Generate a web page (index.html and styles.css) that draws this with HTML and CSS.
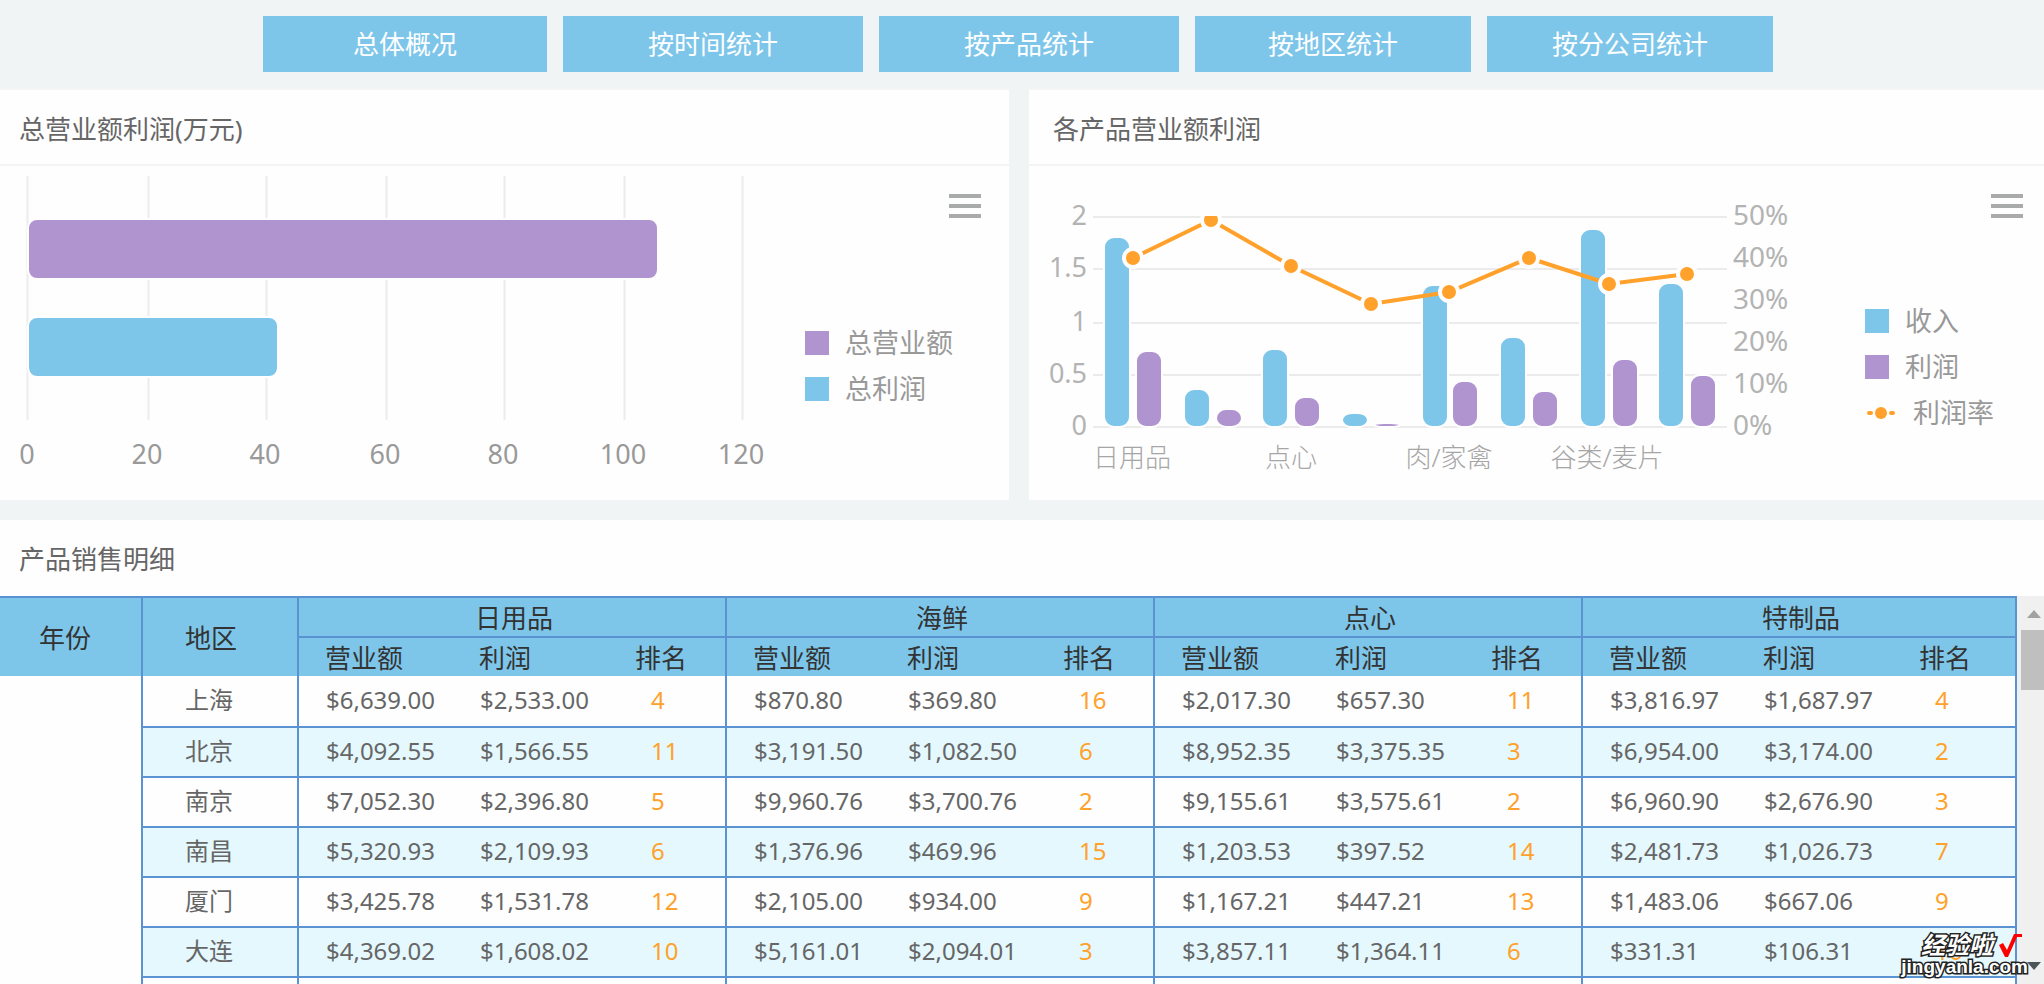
FILE: index.html
```
<!DOCTYPE html>
<html lang="zh-CN">
<head>
<meta charset="utf-8">
<title>产品销售统计</title>
<link rel="stylesheet" href="styles.css">
</head>
<body>
<nav class="tabs">
  <button class="tab tab-overview" type="button">总体概况</button>
  <button class="tab tab-time" type="button">按时间统计</button>
  <button class="tab tab-product" type="button">按产品统计</button>
  <button class="tab tab-region" type="button">按地区统计</button>
  <button class="tab tab-branch" type="button">按分公司统计</button>
</nav>

<main class="board">
  <div class="charts">
    <section class="panel">
      <h2 class="panel-title">总营业额利润(万元)</h2>
      <div class="chart-body">
        <svg class="plot" viewBox="0 0 805 334" role="img" aria-label="总营业额利润">
          <path class="grid-thin" d="M27.5 10V254M148.5 10V254M266.5 10V254M386.5 10V254M504.5 10V254M624.5 10V254M742.5 10V254"/>
          <rect class="bar purple" x="28" y="53" width="630" height="60" rx="9"/>
          <rect class="bar blue" x="28" y="151" width="250" height="60" rx="9"/>
          <g class="axis axis-dark middle">
            <text x="27" y="298">0</text><text x="147" y="298">20</text><text x="265" y="298">40</text><text x="385" y="298">60</text><text x="503" y="298">80</text><text x="623" y="298">100</text><text x="741" y="298">120</text>
          </g>
        </svg>
        <div class="side side-total">
          <button class="menu" type="button" aria-label="菜单"><span class="menu-line"></span><span class="menu-line"></span><span class="menu-line"></span></button>
          <ul class="legend">
            <li class="legend-item"><span class="swatch swatch-purple"></span>总营业额</li>
            <li class="legend-item"><span class="swatch swatch-blue"></span>总利润</li>
          </ul>
        </div>
      </div>
    </section>

    <section class="panel">
      <h2 class="panel-title panel-title-wide">各产品营业额利润</h2>
      <div class="chart-body">
        <svg class="plot" viewBox="0 0 836 334" role="img" aria-label="各产品营业额利润">
          <defs><clipPath id="area"><rect x="64" y="50" width="640" height="212"/></clipPath></defs>
          <path class="grid" d="M64 51H698M64 103H698M64 157H698M64 209H698M64 261H698"/>
          <g class="blue bar">
            <rect x="75" y="71" width="26" height="190" rx="10"/>
            <rect x="155" y="223" width="26" height="38" rx="10"/>
            <rect x="233" y="183" width="26" height="78" rx="10"/>
            <rect x="313" y="247" width="26" height="14" rx="10"/>
            <rect x="393" y="119" width="26" height="142" rx="10"/>
            <rect x="471" y="171" width="26" height="90" rx="10"/>
            <rect x="551" y="63" width="26" height="198" rx="10"/>
            <rect x="629" y="117" width="26" height="144" rx="10"/>
          </g>
          <g class="purple bar">
            <rect x="107" y="185" width="26" height="76" rx="10"/>
            <rect x="187" y="243" width="26" height="18" rx="10"/>
            <rect x="265" y="231" width="26" height="30" rx="10"/>
            <rect x="345" y="257" width="26" height="4" rx="10"/>
            <rect x="423" y="215" width="26" height="46" rx="10"/>
            <rect x="503" y="225" width="26" height="36" rx="10"/>
            <rect x="583" y="193" width="26" height="68" rx="10"/>
            <rect x="661" y="209" width="26" height="52" rx="10"/>
          </g>
          <g clip-path="url(#area)">
            <polyline class="trend" points="104,92 182,54 262,100 342,138 420,126 500,92 580,118 658,108"/>
            <g class="dot">
              <circle cx="104" cy="92" r="9"/><circle cx="182" cy="54" r="9"/><circle cx="262" cy="100" r="9"/><circle cx="342" cy="138" r="9"/><circle cx="420" cy="126" r="9"/><circle cx="500" cy="92" r="9"/><circle cx="580" cy="118" r="9"/><circle cx="658" cy="108" r="9"/>
            </g>
          </g>
          <g class="axis end">
            <text x="58" y="59">2</text><text x="58" y="111">1.5</text><text x="58" y="165">1</text><text x="58" y="217">0.5</text><text x="58" y="269">0</text>
          </g>
          <g class="axis percent">
            <text x="704" y="59">50%</text><text x="704" y="101">40%</text><text x="704" y="143">30%</text><text x="704" y="185">20%</text><text x="704" y="227">10%</text><text x="704" y="269">0%</text>
          </g>
          <g class="axis category middle">
            <text x="103" y="301">日用品</text><text x="262" y="301">点心</text><text x="420" y="301">肉/家禽</text><text x="578" y="301">谷类/麦片</text>
          </g>
        </svg>
        <div class="side side-product">
          <button class="menu" type="button" aria-label="菜单"><span class="menu-line"></span><span class="menu-line"></span><span class="menu-line"></span></button>
          <ul class="legend">
            <li class="legend-item"><span class="swatch swatch-blue"></span>收入</li>
            <li class="legend-item"><span class="swatch swatch-purple"></span>利润</li>
            <li class="legend-item"><svg class="swatch-line" viewBox="0 0 32 16" aria-hidden="true"><path class="trend round" d="M4 8H6M26 8H28"/><circle class="dot-small" cx="16" cy="8" r="6"/></svg>利润率</li>
          </ul>
        </div>
      </div>
    </section>
  </div>

  <section class="panel details">
    <h2 class="details-title">产品销售明细</h2>
    <div class="details-body">
      <div class="table-view">
        <table class="sales">
          <colgroup>
            <col class="col-year"><col class="col-city">
            <col class="col-money"><col class="col-money"><col class="col-rank">
            <col class="col-money"><col class="col-money"><col class="col-rank">
            <col class="col-money"><col class="col-money"><col class="col-rank">
            <col class="col-money"><col class="col-money"><col class="col-last">
          </colgroup>
          <thead>
            <tr>
              <th class="year line" rowspan="2">年份</th><th class="city line" rowspan="2">地区</th>
              <th class="group line" colspan="3">日用品</th><th class="group line" colspan="3">海鲜</th><th class="group line" colspan="3">点心</th><th class="group line" colspan="3">特制品</th>
            </tr>
            <tr class="sub">
              <th>营业额</th><th>利润</th><th class="line">排名</th>
              <th>营业额</th><th>利润</th><th class="line">排名</th>
              <th>营业额</th><th>利润</th><th class="line">排名</th>
              <th>营业额</th><th>利润</th><th class="line">排名</th>
            </tr>
          </thead>
          <tbody>
            <tr class="first"><td class="blank line" rowspan="7"></td><td class="city line">上海</td><td>$6,639.00</td><td>$2,533.00</td><td class="rank line">4</td><td>$870.80</td><td>$369.80</td><td class="rank line">16</td><td>$2,017.30</td><td>$657.30</td><td class="rank line">11</td><td>$3,816.97</td><td>$1,687.97</td><td class="rank line">4</td></tr>
            <tr><td class="city line">北京</td><td>$4,092.55</td><td>$1,566.55</td><td class="rank line">11</td><td>$3,191.50</td><td>$1,082.50</td><td class="rank line">6</td><td>$8,952.35</td><td>$3,375.35</td><td class="rank line">3</td><td>$6,954.00</td><td>$3,174.00</td><td class="rank line">2</td></tr>
            <tr><td class="city line">南京</td><td>$7,052.30</td><td>$2,396.80</td><td class="rank line">5</td><td>$9,960.76</td><td>$3,700.76</td><td class="rank line">2</td><td>$9,155.61</td><td>$3,575.61</td><td class="rank line">2</td><td>$6,960.90</td><td>$2,676.90</td><td class="rank line">3</td></tr>
            <tr><td class="city line">南昌</td><td>$5,320.93</td><td>$2,109.93</td><td class="rank line">6</td><td>$1,376.96</td><td>$469.96</td><td class="rank line">15</td><td>$1,203.53</td><td>$397.52</td><td class="rank line">14</td><td>$2,481.73</td><td>$1,026.73</td><td class="rank line">7</td></tr>
            <tr><td class="city line">厦门</td><td>$3,425.78</td><td>$1,531.78</td><td class="rank line">12</td><td>$2,105.00</td><td>$934.00</td><td class="rank line">9</td><td>$1,167.21</td><td>$447.21</td><td class="rank line">13</td><td>$1,483.06</td><td>$667.06</td><td class="rank line">9</td></tr>
            <tr><td class="city line">大连</td><td>$4,369.02</td><td>$1,608.02</td><td class="rank line">10</td><td>$5,161.01</td><td>$2,094.01</td><td class="rank line">3</td><td>$3,857.11</td><td>$1,364.11</td><td class="rank line">6</td><td>$331.31</td><td>$106.31</td><td class="rank line">16</td></tr>
            <tr><td class="city line"></td><td></td><td></td><td class="rank line"></td><td></td><td></td><td class="rank line"></td><td></td><td></td><td class="rank line"></td><td></td><td></td><td class="rank line"></td></tr>
          </tbody>
        </table>
      </div>
      <div class="scrollbar" aria-hidden="true">
        <svg class="arrow" viewBox="0 0 14 8"><path fill="#a0a2a2" d="M7 0L14 8H0Z"/></svg>
        <div class="thumb"></div>
        <svg class="arrow arrow-down" viewBox="0 0 14 8"><path fill="#4d5558" d="M0 0H14L7 8Z"/></svg>
      </div>
    </div>
  </section>
</main>

<div class="watermark">
  <div class="mark-top"><span class="mark-name">经验啦</span><svg class="tick" viewBox="0 0 24 24" aria-hidden="true"><path d="M1 12L5 10L9 17L16 1H24V4H19L10 24H7Z" fill="#f00"/></svg></div>
  <div class="mark-site">jingyanla.com</div>
</div>
</body>
</html>
```
FILE: styles.css
```
* { box-sizing: border-box; }

body {
  margin: 0;
  height: 100vh;
  display: flex;
  flex-direction: column;
  overflow: hidden;
  background: #f0f4f5;
  color: #666;
  font-family: "Noto Sans", "Noto Sans CJK SC", sans-serif;
}

button { font: inherit; border: 0; cursor: pointer; }

.tabs {
  display: flex;
  justify-content: center;
  gap: 16px;
  padding: 16px 8px 16px 0;
}
.tab {
  height: 56px;
  padding: 0;
  background: #7dc6ea;
  color: #fff;
  font-size: 26px;
  line-height: 36px;
}
.tab-overview { width: 284px; }
.tab-time, .tab-product { width: 300px; }
.tab-region { width: 276px; }
.tab-branch { width: 286px; }

.board {
  flex: 1;
  min-height: 0;
  display: flex;
  flex-direction: column;
  gap: 20px;
}
.charts {
  display: grid;
  grid-template-columns: 1009fr 1015fr;
  gap: 20px;
}
.panel { background: #fefefe; min-width: 0; }
.charts .panel { border-top: 2px solid #f3f4f4; }
.panel-title, .details-title {
  margin: 0;
  font-size: 26px;
  font-weight: 400;
  line-height: 36px;
}
.panel-title {
  padding: 21px 19px 17px;
  border-bottom: 2px solid #f3f4f4;
}
.panel-title-wide { padding-left: 24px; }

.chart-body { display: flex; align-items: flex-start; }
.plot { flex: 1; min-width: 0; display: block; }
.grid-thin { stroke: #ececec; stroke-width: 2; }
.grid { stroke: #ebebeb; stroke-width: 2; }
.bar { stroke: #fefefe; stroke-width: 2; }
.blue { fill: #7dc6ea; }
.purple { fill: #b094d0; }
.trend { fill: none; stroke: #ffa12b; stroke-width: 4; }
.round { stroke-linecap: round; }
.dot { fill: #ffa12b; stroke: #fefefe; stroke-width: 4; }
.dot-small { fill: #ffa12b; }
.axis { font-size: 27px; fill: #b3b3b3; }
.axis-dark { fill: #999; }
.percent { font-size: 28px; }
.category { font-size: 26px; font-weight: 300; fill: #a6a6a6; }
.middle { text-anchor: middle; }
.end { text-anchor: end; }

.side {
  align-self: stretch;
  display: flex;
  flex-direction: column;
  justify-content: space-between;
}
.side-total { width: 204px; padding: 28px 28px 88px 0; }
.side-product { width: 179px; padding: 28px 21px 64px 0; }
.menu {
  align-self: flex-end;
  width: 32px;
  padding: 0;
  background: none;
  display: flex;
  flex-direction: column;
  gap: 6px;
}
.menu-line { width: 100%; height: 4px; background: #a9abaa; }
.legend { margin: 0; padding: 0; list-style: none; }
.legend-item {
  display: flex;
  align-items: center;
  height: 46px;
  font-size: 27px;
  line-height: 46px;
  color: #999;
  white-space: nowrap;
}
.swatch { width: 24px; height: 24px; margin-right: 16px; }
.swatch-purple { background: #b094d0; }
.swatch-blue { background: #7dc6ea; }
.swatch-line { width: 32px; height: 16px; margin-right: 16px; }

.details {
  flex: 1;
  min-height: 0;
  display: flex;
  flex-direction: column;
}
.details-title { padding: 21px 19px 19px; }
.details-body { flex: 1; min-height: 0; display: flex; }
.table-view { flex: 1; min-width: 0; overflow: hidden; }
.sales {
  width: 100%;
  table-layout: fixed;
  border-collapse: separate;
  border-spacing: 0;
  border-top: 2px solid #5b93d2;
  font-size: 24px;
  line-height: 34px;
}
.col-year { width: 143px; }
.col-city { width: 156px; }
.col-money { width: 154px; }
.col-rank { width: 120px; }
.col-last { width: 126px; }

.sales th {
  padding: 2px 0 0 26px;
  background: #7dc6ea;
  color: #333;
  font-size: 26px;
  font-weight: 400;
  line-height: 36px;
  text-align: left;
}
.sales .line { border-right: 2px solid #5b93d2; }
.sales .group {
  height: 40px;
  padding: 2px 0 0 4px;
  border-bottom: 2px solid #5b93d2;
  text-align: center;
}
.sales .sub th { height: 38px; }
.sales .sub .line { padding-left: 28px; }
.sales .year { padding-left: 39px; }
.sales .city { padding-left: 42px; }
.sales td {
  height: 50px;
  padding: 0 0 2px 27px;
  border-bottom: 2px solid #5b93d2;
  background: #fefefe;
  white-space: nowrap;
}
.sales .first td { height: 52px; }
.sales tr:nth-child(even) td { background: #e4f8fe; }
.sales .blank { border-bottom: 0; }
.sales .rank { padding-left: 44px; color: #ffa12b; }

.scrollbar {
  width: 27px;
  padding: 14px 0;
  display: flex;
  flex-direction: column;
  align-items: flex-end;
  gap: 12px;
  background: #f0f0f0;
}
.arrow { width: 14px; height: 8px; margin-right: 3px; }
.arrow-down { margin-top: auto; }
.thumb { width: 23px; height: 60px; background: #bfbfbf; }

.watermark {
  position: absolute;
  right: 16px;
  bottom: 7px;
  color: #fff;
  font-weight: 700;
  -webkit-text-stroke: 3px #222;
  paint-order: stroke fill;
}
.mark-top {
  display: flex;
  align-items: flex-start;
  justify-content: flex-end;
  gap: 5px;
  padding-right: 6px;
}
.mark-name { font-size: 24px; line-height: 24px; font-style: italic; }
.tick { width: 24px; height: 24px; }
.mark-site {
  font-family: "Liberation Sans", sans-serif;
  font-size: 19px;
  line-height: 20px;
}
```
